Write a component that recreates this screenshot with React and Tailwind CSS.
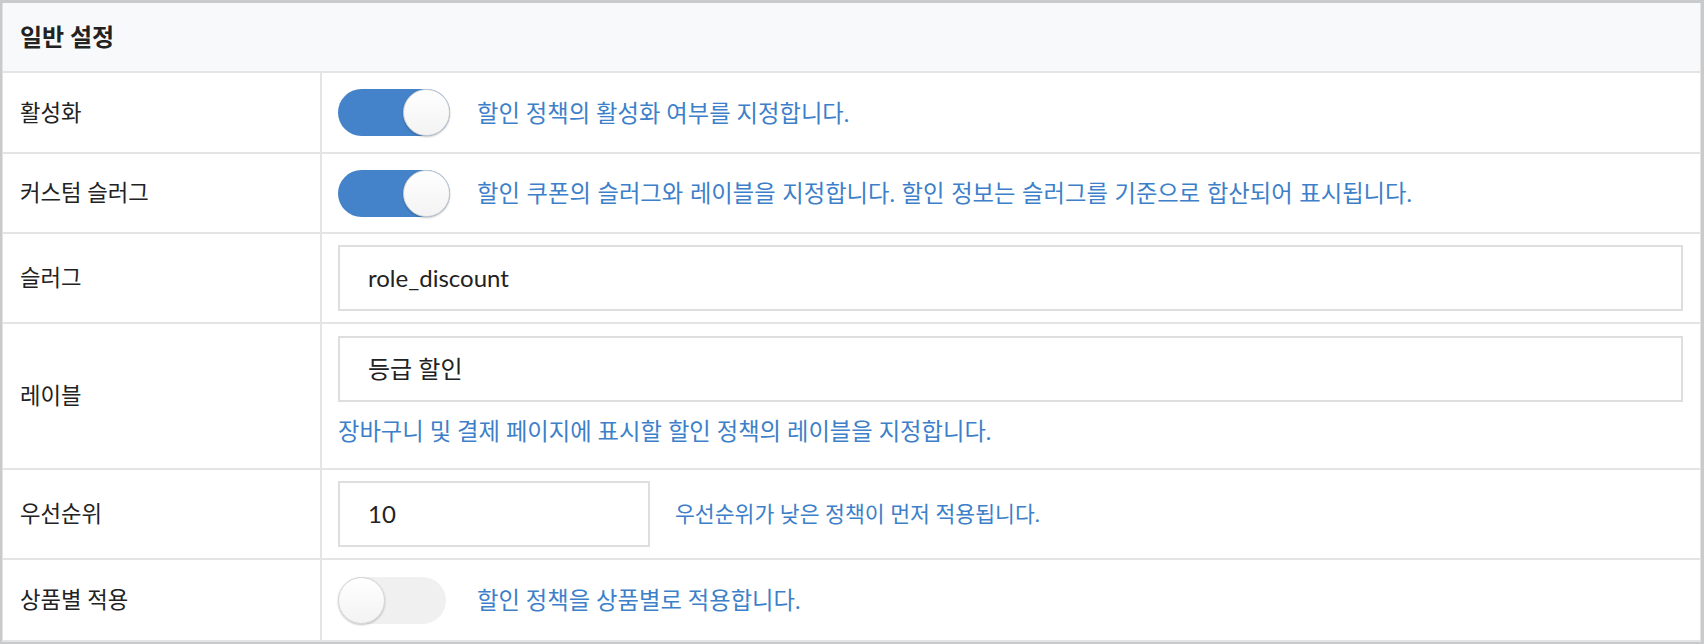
import React from "react";

const FONT = { fontFamily: 'Lato, "Noto Sans CJK KR", sans-serif' };

function Toggle({ on }) {
  if (on) {
    return (
      <div className="relative h-[47px] w-[112px] shrink-0 rounded-full bg-[#4483c9]">
        <div className="absolute right-0 top-0 h-[47px] w-[47px] rounded-full border border-[#d4d4d4] bg-gradient-to-b from-white to-[#f3f3f3] shadow-[0_1px_2px_rgba(0,0,0,0.25)]" />
      </div>
    );
  }
  return (
    <div className="relative h-[47px] w-[108px] shrink-0 rounded-full bg-[#f0f0f0]">
      <div className="absolute left-0 top-0 h-[47px] w-[47px] rounded-full border border-[#d4d4d4] bg-gradient-to-b from-white to-[#f3f3f3] shadow-[0_1px_2px_rgba(0,0,0,0.25)]" />
    </div>
  );
}

function Row({ label, children, h }) {
  return (
    <div className={`flex border-b-2 border-[#e4e4e4] ${h}`}>
      <div className="flex w-[319px] shrink-0 items-center border-r-2 border-[#e4e4e4] pl-[17px] text-[22.3px] text-[#222]">
        {label}
      </div>
      <div className="flex min-w-0 flex-1 flex-col justify-center pl-[16px] pr-[17px]">
        {children}
      </div>
    </div>
  );
}

function Desc({ children, className = "" }) {
  return <span className={`leading-[28px] text-[#3d7fc8] ${className}`}>{children}</span>;
}

function Input({ value, className = "" }) {
  return (
    <div className={`flex h-[66px] items-center border-2 border-[#dedede] bg-white pl-[28px] text-[24px] text-[#222] ${className}`}>
      {value}
    </div>
  );
}

export default function App() {
  return (
    <div style={FONT} className="h-[644px] w-[1704px] bg-[#c9cacc] pl-[2px] pr-[3px] pt-[3px] pb-[2px]">
      <div className="border-x border-[#e2e2e2] bg-white">
        <div className="flex h-[70px] items-center border-b-2 border-[#e4e4e4] bg-[#f8f9fa] pl-[17px] text-[24px] font-bold text-[#222]">
          일반 설정
        </div>
        <Row label="활성화" h="h-[81px]">
          <div className="flex items-center gap-[27px]">
            <Toggle on />
            <Desc className="text-[23.3px]">할인 정책의 활성화 여부를 지정합니다.</Desc>
          </div>
        </Row>
        <Row label="커스텀 슬러그" h="h-[80px]">
          <div className="flex items-center gap-[27px]">
            <Toggle on />
            <Desc className="text-[23.3px] [word-spacing:0.7px]">할인 쿠폰의 슬러그와 레이블을 지정합니다. 할인 정보는 슬러그를 기준으로 합산되어 표시됩니다.</Desc>
          </div>
        </Row>
        <Row label="슬러그" h="h-[90px]">
          <Input value="role_discount" />
        </Row>
        <Row label="레이블" h="h-[146px]">
          <div className="flex flex-col pb-[11px]">
            <Input value="등급 할인" />
            <Desc className="mt-[15px] text-[23.3px]">장바구니 및 결제 페이지에 표시할 할인 정책의 레이블을 지정합니다.</Desc>
          </div>
        </Row>
        <Row label="우선순위" h="h-[90px]">
          <div className="flex items-center gap-[25px]">
            <Input value="10" className="w-[312px] shrink-0" />
            <Desc className="text-[21.6px]">우선순위가 낮은 정책이 먼저 적용됩니다.</Desc>
          </div>
        </Row>
        <Row label="상품별 적용" h="h-[82px]">
          <div className="flex items-center gap-[31px]">
            <Toggle />
            <Desc className="text-[23.3px]">할인 정책을 상품별로 적용합니다.</Desc>
          </div>
        </Row>
      </div>
    </div>
  );
}
